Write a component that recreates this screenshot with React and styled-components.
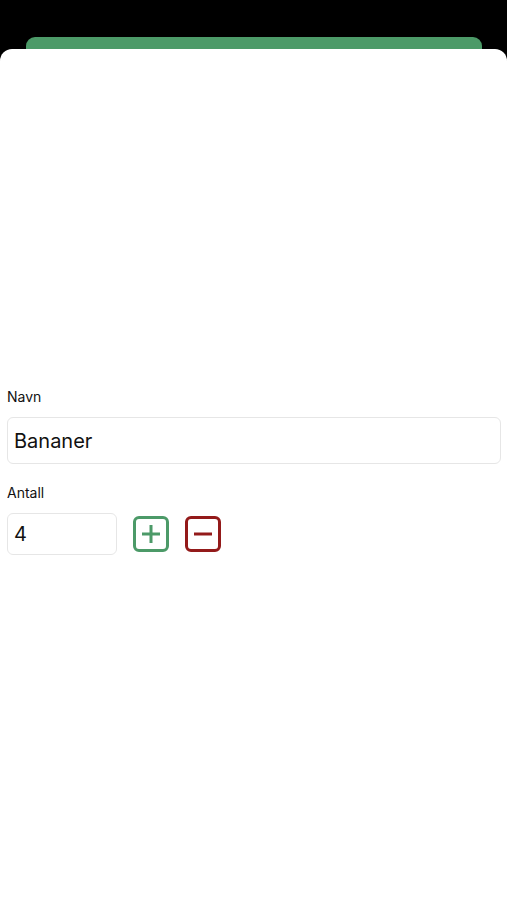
import React from 'react';
import styled, { createGlobalStyle } from 'styled-components';

const Global = createGlobalStyle`
  html, body {
    margin: 0;
    padding: 0;
    background: #000;
    font-family: Inter, "Liberation Sans", Arial, sans-serif;
  }
`;

const Screen = styled.div`
  display: flex;
  flex-direction: column;
  width: 507px;
  height: 900px;
  background: #000;
  overflow: hidden;
`;

const BackCard = styled.div`
  margin: 37px 25px 0 26px;
  height: 12px;
  background: #4c9a68;
  border-radius: 9px 9px 0 0;
`;

const Sheet = styled.div`
  flex: 1;
  background: #fff;
  border-radius: 12px 12px 0 0;
  padding: 339px 6px 0 7px;
`;

const Label = styled.div`
  font-size: 14px;
  color: #111;
  margin-bottom: 12px;
  margin-top: ${(p) => p.$top || 0}px;
`;

const TextField = styled.input`
  box-sizing: border-box;
  display: block;
  width: ${(p) => p.$width || '100%'};
  height: ${(p) => p.$height}px;
  border: 1px solid #e6e6e6;
  border-radius: 6px;
  padding: 0 6px;
  font-family: inherit;
  font-size: 20px;
  color: #111;
  background: #fff;
  outline: none;
`;

const Row = styled.div`
  display: flex;
  align-items: center;
  gap: 16px;
`;

const Buttons = styled.div`
  display: flex;
  gap: 16px;
`;

const IconButton = styled.button`
  box-sizing: border-box;
  width: 36px;
  height: 36px;
  padding: 0;
  border: 3px solid ${(p) => p.$color};
  border-radius: 6px;
  background: #fff;
  display: flex;
  align-items: center;
  justify-content: center;
  cursor: pointer;
`;

export default function App() {
  return (
    <Screen>
      <Global />
      <BackCard />
      <Sheet>
        <Label>Navn</Label>
        <TextField $height={47} defaultValue="Bananer" />
        <Label $top={20}>Antall</Label>
        <Row>
          <TextField $width="110px" $height={42} defaultValue="4" />
          <Buttons>
            <IconButton $color="#4c9a68" aria-label="Legg til">
              <svg width="20" height="20" viewBox="0 0 20 20">
                <path d="M10 1v18M1 10h18" stroke="#4c9a68" strokeWidth="3" />
              </svg>
            </IconButton>
            <IconButton $color="#931a1a" aria-label="Trekk fra">
              <svg width="20" height="20" viewBox="0 0 20 20">
                <path d="M1 10h18" stroke="#931a1a" strokeWidth="3" />
              </svg>
            </IconButton>
          </Buttons>
        </Row>
      </Sheet>
    </Screen>
  );
}
